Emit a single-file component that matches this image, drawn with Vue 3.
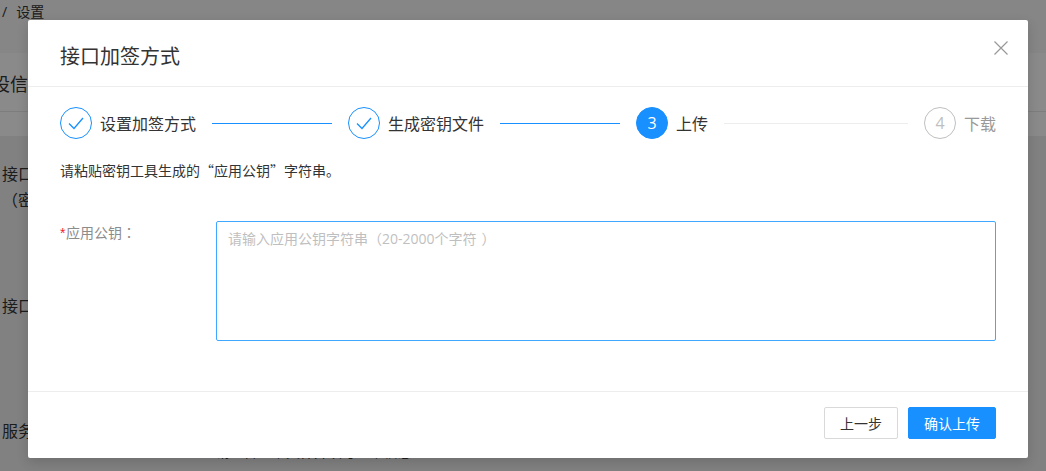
<script setup>
const steps = [
  { key: 1, label: '设置加签方式', state: 'done', line: 'line-blue' },
  { key: 2, label: '生成密钥文件', state: 'done', line: 'line-blue' },
  { key: 3, label: '上传', state: 'active', line: 'line-grey' },
  { key: 4, label: '下载', state: 'wait', line: '' }
]
</script>

<template>
  <div class="page">
    <div class="bg">
      <div class="crumb"><span>/</span><span>设置</span></div>
      <div class="bg-title">设信</div>
      <div class="bg-band"></div>
      <div class="bg-rows">
        <div class="bg-row r1">接口<br /><span class="cjk-p">（</span>密</div>
        <div class="bg-row r2">接口</div>
        <div class="bg-row r3">服务</div>
        <div class="bg-under">请上传证书文件并填写证书信息</div>
      </div>
    </div>
    <div class="mask"></div>
    <div class="modal">
      <header class="head">
        <h2 class="title">接口加签方式</h2>
        <svg class="close" width="14" height="14" viewBox="0 0 14 14">
          <path d="M0.5 0.5 13.5 13.5M13.5 0.5 0.5 13.5" stroke="#999" stroke-width="1.2" fill="none" />
        </svg>
      </header>
      <section class="body">
        <div class="steps">
          <template v-for="s in steps" :key="s.key">
            <div class="step" :class="s.state">
              <span class="dot">
                <svg v-if="s.state === 'done'" width="16" height="13" viewBox="0 0 16 13">
                  <path d="M1 6.5 6 11.5 15 1" stroke="#1890ff" stroke-width="1.3" fill="none" />
                </svg>
                <template v-else>{{ s.key }}</template>
              </span>
              <span class="label">{{ s.label }}</span>
            </div>
            <div v-if="s.line" class="line" :class="s.line"></div>
          </template>
        </div>
        <p class="desc">请粘贴密钥工具生成的“应用公钥”字符串。</p>
        <div class="field">
          <label class="field-label"><i>*</i>应用公钥<span class="cjk-p">：</span></label>
          <div class="textarea">请输入应用公钥字符串<span class="cjk-p">（</span>20-2000个字符<span class="cjk-p close-paren">）</span></div>
        </div>
      </section>
      <footer class="foot">
        <button class="btn">上一步</button>
        <button class="btn primary">确认上传</button>
      </footer>
    </div>
  </div>
</template>

<style>
html, body { margin: 0; padding: 0; overflow: hidden; }
</style>

<style scoped>
.page {
  position: relative;
  width: 1046px;
  height: 471px;
  overflow: hidden;
  font-family: "Open Sans", "Noto Sans CJK SC", sans-serif;
  color: #333;
  background: #ebebeb;
}
.bg { display: flex; flex-direction: column; height: 471px; }
.crumb {
  height: 53px;
  box-sizing: border-box;
  padding: 2px 0 0 2px;
  display: flex;
  gap: 9px;
  font-size: 14px;
  line-height: 20px;
  background: #f4f4f4;
}
.bg-title {
  height: 59px;
  box-sizing: border-box;
  padding-top: 17px;
  text-indent: -8px;
  font-size: 18px;
  line-height: 28px;
  background: #fbfbfb;
  border-bottom: 1px solid #e4e4e4;
}
.bg-band { height: 24px; background: #fbfbfb; }
.bg-rows { padding: 26px 0 0 2px; font-size: 16px; line-height: 25px; }
.r2 { margin-top: 81px; }
.r3 { margin-top: 100px; }
.bg-under { margin: -2px 0 0 214px; font-size: 14px; line-height: 20px; }
.mask { position: absolute; inset: 0; background: rgba(0, 0, 0, 0.45); }
.modal {
  position: absolute;
  left: 28px;
  top: 20px;
  width: 1000px;
  height: 438px;
  background: #fff;
  border-radius: 2px;
  display: flex;
  flex-direction: column;
  box-shadow: 0 4px 12px rgba(0, 0, 0, 0.15);
}
.head {
  box-sizing: content-box;
  border-bottom: 1px solid #ededed;
  padding: 8px 32px 0;
  height: 58px;
  display: flex;
  align-items: center;
  position: relative;
}
.title { margin: 0; font-size: 20px; font-weight: 400; color: #333; line-height: 28px; }
.close { position: absolute; right: 20px; top: 21px; }
.body { flex: 1; padding: 20px 32px 0; }
.steps { display: flex; align-items: center; height: 32px; }
.step { display: flex; align-items: center; gap: 8px; }
.dot {
  width: 32px;
  height: 32px;
  box-sizing: border-box;
  border-radius: 50%;
  border: 1px solid #1890ff;
  display: flex;
  align-items: center;
  justify-content: center;
  font-size: 16px;
}
.active .dot { background: #1890ff; color: #fff; }
.wait .dot { border-color: #bfbfbf; color: #bfbfbf; }
.label { font-size: 16px; line-height: 32px; color: #333; padding-top: 1px; }
.wait .label { color: #999; }
.line { height: 1px; margin: 0 16px; }
.line-blue { width: 120px; background: #1890ff; }
.line-grey { width: 184px; background: #ededed; }
.desc {
  margin: 20px 0 0;
  font-family: "Noto Sans CJK SC", sans-serif;
  font-size: 14px;
  line-height: 22px;
  color: #333;
}
.field { display: flex; margin-top: 40px; }
.field-label { width: 156px; font-size: 14px; line-height: 22px; color: #8c8c8c; }
.field-label i {
  display: inline-block;
  width: 6px;
  color: #f5222d;
  font-style: normal;
  font-family: "Liberation Sans", sans-serif;
}
.cjk-p { font-family: "Noto Sans CJK TC", sans-serif; }
.close-paren { padding-left: 5px; }
.textarea {
  width: 780px;
  height: 120px;
  box-sizing: border-box;
  border: 1px solid #40a9ff;
  border-radius: 2px;
  padding: 5px 11px;
  font-size: 14px;
  line-height: 22px;
  color: #bfbfbf;
}
.foot {
  height: 67px;
  border-top: 1px solid #ededed;
  padding: 15px 32px 0;
  box-sizing: border-box;
  display: flex;
  justify-content: flex-end;
  gap: 10px;
}
.btn {
  height: 32px;
  width: 74px;
  box-sizing: border-box;
  border: 1px solid #d9d9d9;
  border-radius: 2px;
  background: #fff;
  color: #333;
  font: inherit;
  font-size: 14px;
  padding: 0;
}
.primary { width: 88px; background: #1890ff; border-color: #1890ff; color: #fff; }
</style>
